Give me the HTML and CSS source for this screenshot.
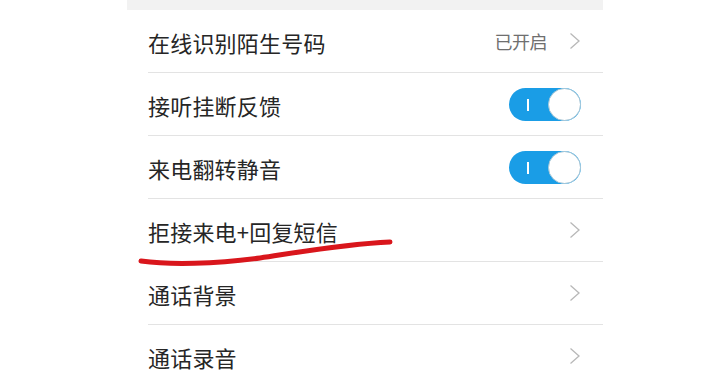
FILE: index.html
```html
<!DOCTYPE html>
<html lang="zh">
<head>
<meta charset="utf-8">
<link rel="stylesheet" href="styles.css">
</head>
<body>
<div class="page">
  <div class="panel">
    <div class="topband"></div>
    <div class="row">
      <span class="label">在线识别陌生号码</span>
      <span class="right"><span class="value">已开启</span><svg class="chev" viewBox="0 0 12 18"><path d="M1.5 1.5 L10 9 L1.5 16.5" /></svg></span>
    </div>
    <div class="row">
      <span class="label">接听挂断反馈</span>
      <span class="switch"><span class="bar"></span><span class="knob"></span></span>
    </div>
    <div class="row">
      <span class="label">来电翻转静音</span>
      <span class="switch"><span class="bar"></span><span class="knob"></span></span>
    </div>
    <div class="row">
      <span class="label">拒接来电+回复短信</span>
      <span class="right"><svg class="chev" viewBox="0 0 12 18"><path d="M1.5 1.5 L10 9 L1.5 16.5" /></svg></span>
    </div>
    <div class="row">
      <span class="label">通话背景</span>
      <span class="right"><svg class="chev" viewBox="0 0 12 18"><path d="M1.5 1.5 L10 9 L1.5 16.5" /></svg></span>
    </div>
    <div class="row">
      <span class="label">通话录音</span>
      <span class="right"><svg class="chev" viewBox="0 0 12 18"><path d="M1.5 1.5 L10 9 L1.5 16.5" /></svg></span>
    </div>
  </div>
  <svg class="scribble" viewBox="0 0 713 380" width="713" height="380">
    <path d="M141 261 C 170 265, 215 264, 260 258 C 300 252, 345 244, 390 242" />
  </svg>
</div>
</body>
</html>
```

FILE: styles.css
```css
html, body {
  margin: 0;
  padding: 0;
  background: #ffffff;
}
body {
  font-family: "Noto Sans CJK SC", "Noto Sans", sans-serif;
  color: #222222;
}
.page {
  position: relative;
  width: 713px;
  height: 380px;
  overflow: hidden;
}
.panel {
  margin-left: 127px;
  width: 476px;
  background: #ffffff;
}
.topband {
  height: 10px;
  background: #f2f2f2;
}
.row {
  margin-left: 21px;
  height: 62px;
  border-bottom: 1px solid #e3e3e3;
  display: flex;
  align-items: center;
  justify-content: space-between;
  padding-right: 22px;
}
.label {
  font-size: 22px;
  color: #262626;
  letter-spacing: 0.2px;
  position: relative;
  top: 1px;
}
.right {
  display: flex;
  align-items: center;
  gap: 22px;
}
.value {
  font-size: 18px;
  color: #6f6f6f;
  letter-spacing: -0.5px;
}
.chev {
  width: 12px;
  height: 18px;
  margin-right: 0;
}
.chev path {
  fill: none;
  stroke: #b8b8b8;
  stroke-width: 1.3;
}
.switch {
  position: relative;
  width: 72px;
  height: 33px;
  border-radius: 17px;
  background: #1a9de6;
  display: block;
}
.bar {
  position: absolute;
  left: 18px;
  top: 11px;
  width: 2px;
  height: 12px;
  background: #ffffff;
}
.knob {
  position: absolute;
  right: 0;
  top: 0;
  width: 31px;
  height: 31px;
  border-radius: 50%;
  background: #ffffff;
  border: 1px solid #a9c7d6;
}
.scribble {
  position: absolute;
  left: 0;
  top: 0;
  pointer-events: none;
}
.scribble path {
  fill: none;
  stroke: #d9161c;
  stroke-width: 5;
  stroke-linecap: round;
}
```
